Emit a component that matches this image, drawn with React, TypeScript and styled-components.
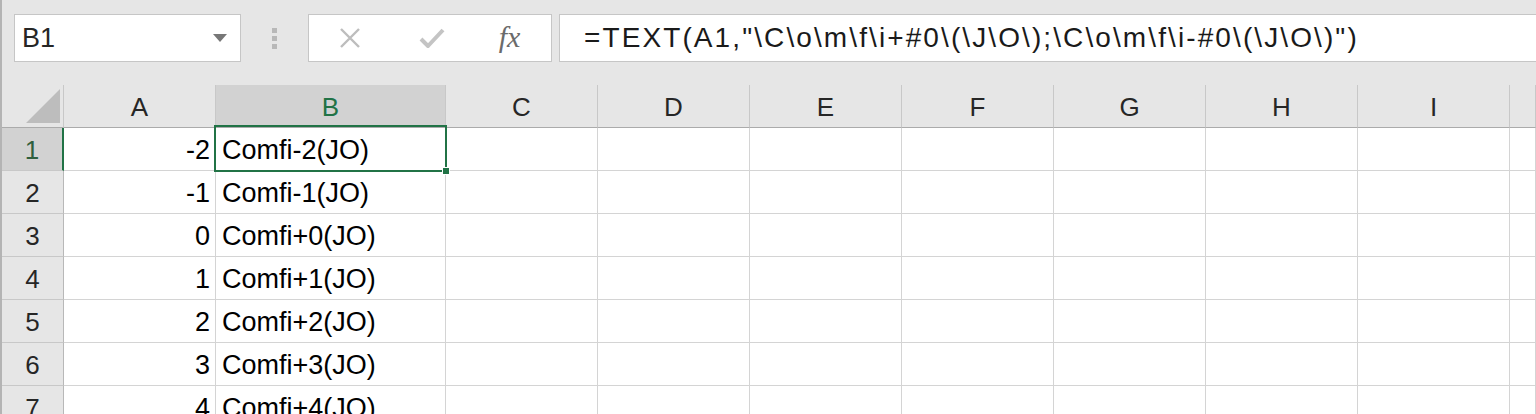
import React from 'react';
import styled, { createGlobalStyle } from 'styled-components';

const GlobalStyle = createGlobalStyle`
  html, body {
    margin: 0;
    padding: 0;
    overflow: hidden;
    background: #ffffff;
  }
`;

const GREEN = '#217346';
const FONT = `"Liberation Sans", Arial, sans-serif`;

const Frame = styled.div`
  height: 100vh;
  overflow: hidden;
  display: flex;
  flex-direction: column;
  border-left: 2px solid #b4b4b4;
  box-shadow: inset 1px 0 0 ${GREEN};
  font-family: ${FONT};
  color: #1a1a1a;
`;

// Barra da fórmula
const Toolbar = styled.div`
  height: 85px;
  flex: none;
  display: flex;
  align-items: flex-start;
  padding: 14px 0 0 12px;
  background: #e6e6e6;
  box-sizing: border-box;
`;

const NameBox = styled.div`
  width: 227px;
  height: 48px;
  box-sizing: border-box;
  background: #fff;
  border: 1px solid #c6c6c6;
  display: flex;
  align-items: center;
  justify-content: space-between;
  padding: 0 13px 0 7px;
  font-size: 27px;
  color: #262626;
`;

const Grip = styled.div`
  width: 67px;
  height: 48px;
  display: flex;
  flex-direction: column;
  align-items: center;
  justify-content: center;
  gap: 3px;

  span {
    width: 5px;
    height: 5px;
    background: #b8b8b8;
  }
`;

const FxButtons = styled.div`
  width: 244px;
  height: 48px;
  box-sizing: border-box;
  background: #fff;
  border: 1px solid #c6c6c6;
  display: grid;
  grid-template-columns: 82px 81px 1fr;
  align-items: center;
  justify-items: center;
`;

const FxLabel = styled.span`
  font-family: "Liberation Serif", "Times New Roman", serif;
  font-style: italic;
  font-size: 30px;
  color: #6b6b6b;
  margin-right: 4px;
  margin-top: -3px;
`;

const FormulaBar = styled.div`
  flex: 1;
  height: 48px;
  margin-left: 7px;
  margin-right: -4px;
  box-sizing: border-box;
  background: #fff;
  border: 1px solid #c6c6c6;
  display: flex;
  align-items: center;
  padding-left: 24px;
  font-size: 28px;
  letter-spacing: 2.1px;
  color: #1a1a1a;
  white-space: nowrap;
  overflow: hidden;
`;

// Planilha
const Sheet = styled.div`
  display: grid;
  grid-template-columns: 62px 152px 230px repeat(7, 152px) 1fr;
  grid-auto-rows: 43px;
`;

const Corner = styled.div`
  background: #e6e6e6;
  border-right: 1px solid #c8c8c8;
  border-bottom: 1px solid #ababab;
  box-sizing: border-box;
  display: flex;
  align-items: flex-end;
  justify-content: flex-end;
  padding: 0 3px 4px 0;
`;

const ColHeader = styled.div<{ $active?: boolean }>`
  background: ${p => (p.$active ? '#d2d2d2' : '#e6e6e6')};
  color: ${p => (p.$active ? GREEN : '#262626')};
  border-right: 1px solid #c8c8c8;
  border-bottom: 1px solid #ababab;
  box-sizing: border-box;
  display: flex;
  align-items: center;
  justify-content: center;
  font-size: 26px;
  padding-top: 2px;
`;

const RowHeader = styled.div<{ $active?: boolean }>`
  background: ${p => (p.$active ? '#d2d2d2' : '#e6e6e6')};
  color: ${p => (p.$active ? '#2f5f3e' : '#262626')};
  border-right: ${p => (p.$active ? `2px solid ${GREEN}` : '1px solid #b8b8b8')};
  border-bottom: 1px solid #c8c8c8;
  box-sizing: border-box;
  display: flex;
  align-items: center;
  justify-content: center;
  font-size: 26px;
  padding-top: 3px;
`;

const Cell = styled.div<{ $align?: 'left' | 'right' }>`
  position: relative;
  background: #fff;
  border-right: 1px solid #d4d4d4;
  border-bottom: 1px solid #d4d4d4;
  box-sizing: border-box;
  display: flex;
  align-items: center;
  justify-content: ${p => (p.$align === 'right' ? 'flex-end' : 'flex-start')};
  padding: 3px 5px 0 6px;
  font-size: 27px;
  color: #000;
  white-space: nowrap;
`;

const Selection = styled.div`
  position: absolute;
  z-index: 2;
  left: -2px;
  top: -3px;
  right: -2px;
  bottom: -2px;
  border: 2px solid ${GREEN};
  pointer-events: none;
`;

const Handle = styled.div`
  position: absolute;
  right: -5px;
  bottom: -5px;
  width: 6px;
  height: 6px;
  background: ${GREEN};
  border: 1px solid #fff;
`;

const columns = ['A', 'B', 'C', 'D', 'E', 'F', 'G', 'H', 'I', ''];
const values = [-2, -1, 0, 1, 2, 3, 4, 5];

const format = (n: number) => `Comfi${n < 0 ? '-' : '+'}${Math.abs(n)}(JO)`;

const App: React.FC = () => {
  return (
    <>
      <GlobalStyle />
      <Frame>
        <Toolbar>
          <NameBox>
            <span>B1</span>
            <svg width="14" height="8" viewBox="0 0 14 8">
              <polygon points="0,0 14,0 7,8" fill="#777" />
            </svg>
          </NameBox>
          <Grip>
            <span />
            <span />
            <span />
          </Grip>
          <FxButtons>
            <svg width="22" height="22" viewBox="0 0 22 22">
              <path d="M2 2 L20 20 M20 2 L2 20" stroke="#bdbdbd" strokeWidth="2.4" fill="none" />
            </svg>
            <svg width="26" height="22" viewBox="0 0 26 22">
              <path d="M2 12 L9 19 L24 3" stroke="#c4c4c4" strokeWidth="4" fill="none" strokeLinejoin="round" />
            </svg>
            <FxLabel>fx</FxLabel>
          </FxButtons>
          <FormulaBar>=TEXT(A1,"\C\o\m\f\i+#0\(\J\O\);\C\o\m\f\i-#0\(\J\O\)")</FormulaBar>
        </Toolbar>

        <Sheet>
          <Corner>
            <svg width="34" height="34" viewBox="0 0 34 34">
              <polygon points="34,0 34,34 0,34" fill="#bdbdbd" />
            </svg>
          </Corner>
          {columns.map((c, i) => (
            <ColHeader key={i} $active={c === 'B'}>
              {c}
            </ColHeader>
          ))}
          {values.map((v, r) => (
            <React.Fragment key={r}>
              <RowHeader $active={r === 0}>{r + 1}</RowHeader>
              <Cell $align="right">{v}</Cell>
              <Cell>
                {format(v)}
                {r === 0 && (
                  <Selection>
                    <Handle />
                  </Selection>
                )}
              </Cell>
              {columns.slice(2).map((_, c) => (
                <Cell key={c} />
              ))}
            </React.Fragment>
          ))}
        </Sheet>
      </Frame>
    </>
  );
};

export default App;
